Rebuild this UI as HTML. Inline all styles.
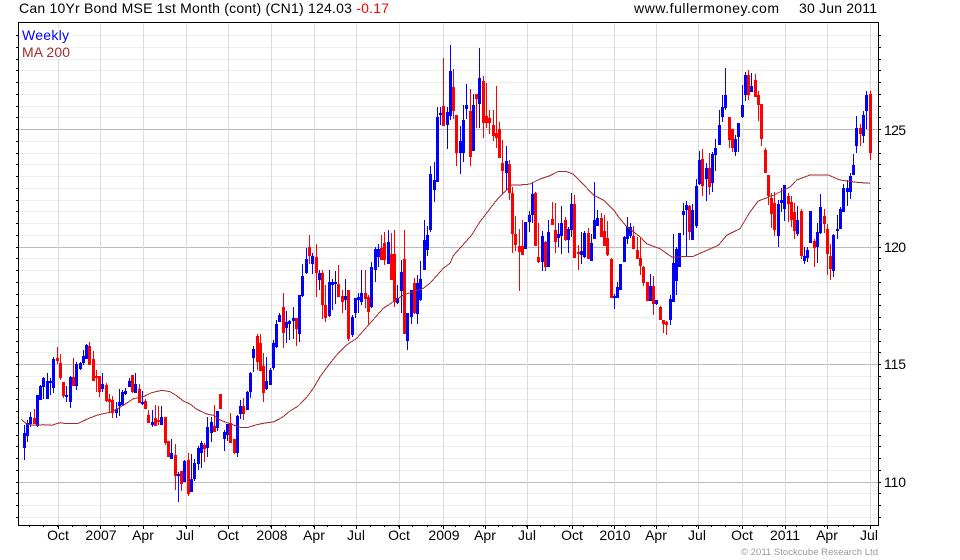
<!DOCTYPE html>
<html><head><meta charset="utf-8"><style>
html,body{margin:0;padding:0;background:#fff;width:960px;height:560px;overflow:hidden}
svg{display:block;position:absolute;left:0;top:0}
text{font-family:"Liberation Sans",Arial,sans-serif;font-size:14px;fill:#000}
</style></head><body>
<svg id="c" width="960" height="560" viewBox="0 0 960 560" xmlns="http://www.w3.org/2000/svg">
<g id="grid" shape-rendering="crispEdges"></g>
<rect x="19" y="27" width="54" height="32" fill="#fff"/>
<g id="cand" shape-rendering="crispEdges"></g>
<polyline id="ma" fill="none" stroke="#a52a2a" stroke-width="1" shape-rendering="crispEdges" points=""/>
<g id="frame" shape-rendering="crispEdges"></g>
<text x="19" y="13" textLength="370" lengthAdjust="spacing">Can 10Yr Bond MSE 1st Month (cont) (CN1) 124.03 <tspan fill="#ff0000">-0.17</tspan></text>
<text x="634" y="13" textLength="145" lengthAdjust="spacing">www.fullermoney.com</text>
<text x="799" y="13" textLength="78" lengthAdjust="spacing">30 Jun 2011</text>
<text x="22" y="40" fill="#0000ff" style="fill:#0000ff" textLength="47" lengthAdjust="spacing">Weekly</text>
<text x="22" y="57" style="fill:#a52a2a" textLength="48" lengthAdjust="spacing">MA 200</text>
<text x="884" y="135" textLength="22" lengthAdjust="spacing">125</text>
<text x="884" y="252" textLength="22" lengthAdjust="spacing">120</text>
<text x="884" y="369" textLength="22" lengthAdjust="spacing">115</text>
<text x="884" y="487" textLength="22" lengthAdjust="spacing">110</text>
<g text-anchor="middle">
<text x="58" y="540">Oct</text><text x="101" y="540">2007</text><text x="143" y="540">Apr</text><text x="185" y="540">Jul</text><text x="228" y="540">Oct</text><text x="272" y="540">2008</text><text x="314" y="540">Apr</text><text x="356" y="540">Jul</text><text x="399" y="540">Oct</text><text x="444" y="540">2009</text><text x="485" y="540">Apr</text><text x="527" y="540">Jul</text><text x="572" y="540">Oct</text><text x="615" y="540">2010</text><text x="656" y="540">Apr</text><text x="697" y="540">Jul</text><text x="742" y="540">Oct</text><text x="785" y="540">2011</text><text x="827" y="540">Apr</text><text x="869" y="540">Jul</text>
</g>
<text x="741" y="555" style="font-size:9.5px;fill:#999" textLength="137" lengthAdjust="spacing">© 2011 Stockcube Research Ltd</text>
</svg>
<script>
var NS="http://www.w3.org/2000/svg";
function R(p,x,y,w,h,f){var r=document.createElementNS(NS,"rect");r.setAttribute("x",x);r.setAttribute("y",y);r.setAttribute("width",w);r.setAttribute("height",h);r.setAttribute("fill",f);p.appendChild(r);}
var g=document.getElementById("grid"),fr=document.getElementById("frame"),cd=document.getElementById("cand");
var vx=[58,100,143,186,228,271,314,356,399,443,485,527,572,614,656,698,742,785,827,870];
for(var k=-9;k<=33;k++){var y=Math.round(129+k*11.75);if(y<=23||y>=525)continue;var maj=(k%10===0);
 R(g,18,y,860,1,maj?"#bbbbbb":"#eeeeee");
 R(fr,16,y,2,1,"#000");R(fr,879,y,2,1,"#000");}
vx.forEach(function(x){R(g,x,23,1,502,"#dcdcdc");R(fr,x,526,1,3,"#000");});
for(var i=0;i<59;i++){var x=Math.round(29+i*14.2);R(fr,x,526,1,1,"#000");}
R(fr,18,22,861,1,"#000");R(fr,18,525,861,1,"#000");R(fr,18,22,1,504,"#000");R(fr,878,22,1,504,"#000");

var col=["#0000ff","#ff0000"];
function S(xo,yo,a){a.forEach(function(d){var x=Math.floor(xo+d[0]/3),wt=Math.round(yo+d[1]/3),wb=Math.round(yo+d[2]/3),bt=Math.round(yo+d[3]/3),bb=Math.round(yo+d[4]/3),c=col[d[5]];
 R(cd,x,wt,1,Math.max(1,wb-wt),c);R(cd,x-1,bt,3,Math.max(1,bb-bt),c);});}
S(0,340,[
[73,255,360,280,324,0],[82,240,305,250,288,0],[91,215,260,231,252,0],[103,207,252,234,252,1],[112,165,260,165,258,0],[121,135,180,138,180,0],[130,112,178,114,142,0],[142,98,178,124,177,0],[151,114,165,124,130,0],[160,52,158,57,144,0],[172,20,72,54,63,1],[181,42,120,69,114,1],[190,125,174,126,168,1],[199,138,186,165,171,0],[211,108,204,111,186,0],[220,54,138,111,138,1],[229,66,150,72,138,0],[241,66,90,69,87,0],[250,30,75,48,69,0],[259,12,57,15,57,0],[268,6,75,18,75,1],[280,33,123,57,123,1],[290,90,156,108,114,1],[299,108,170,108,156,1],[307,99,156,132,147,0],[319,129,186,135,183,1],[328,162,216,177,186,1],[337,168,234,180,219,1],[349,186,234,207,219,0],[358,147,228,186,198,0],[367,150,198,156,195,0],[376,144,165,153,162,0],[388,114,141,123,141,0],[397,105,159,105,156,1],[406,99,159,132,159,0],[418,132,189,147,189,1],[427,153,195,186,192,0],[436,177,207,183,207,1],[445,210,249,225,249,1],[457,210,261,246,255,0],[466,195,258,234,258,1],[475,197,255,240,246,1],[484,198,255,231,255,0],[496,231,315,231,309,1],[505,303,351,303,351,1],[514,297,357,339,357,0],[526,312,450,345,408,1],[535,396,486,402,408,0],[544,393,453,393,432,1],[553,360,426,363,426,0],[565,339,468,360,462,1],[574,342,456,417,456,0],[583,357,423,369,417,0],[595,318,390,324,372,0],[604,303,384,309,339,0],[613,309,366,315,327,1],[622,231,351,261,324,0],[634,231,306,246,279,0],[643,195,276,258,276,1],[652,213,273,213,264,0],[661,162,207,162,207,1],[673,270,333,276,297,0],[682,252,303,252,285,0],[691,219,309,249,309,1],[703,297,342,297,339,1],[712,225,351,228,339,0],[721,180,237,198,222,0],[730,174,240,198,222,1],[742,153,210,156,210,0],[751,96,174,99,156,0]
]);
S(160,240,[
[280,318,396,327,354,0],[292,282,390,288,366,1],[301,282,393,309,393,1],[310,340,486,378,459,1],[319,351,450,423,447,0],[331,384,435,390,435,0],[340,300,390,309,384,0],[349,240,324,252,321,0],[358,219,246,225,246,0],[370,159,324,201,279,1],[379,213,310,246,264,0],[388,240,300,243,252,0],[400,201,297,234,243,0],[409,234,318,234,267,1],[418,165,306,165,282,0],[427,72,171,108,168,0],[439,24,102,57,99,0],[448,-15,72,21,48,1],[457,39,102,48,72,0],[469,12,172,51,99,1],[478,90,150,99,120,0],[487,90,237,99,195,1],[496,135,246,195,234,1],[508,90,231,126,228,0],[517,117,210,126,135,0],[526,93,192,126,132,0],[535,75,171,132,171,1],[547,150,219,168,186,1],[556,117,210,168,180,0],[565,150,303,150,297,1],[577,225,291,231,285,0],[586,174,234,174,219,0],[595,159,219,171,180,0],[604,90,195,159,186,0],[616,90,204,159,177,1],[625,165,252,171,216,1],[634,66,204,81,201,0],[646,21,126,27,90,0],[655,12,81,27,51,0],[664,-15,60,24,60,1],[673,-24,75,9,60,1],[685,-30,72,6,72,0],[694,-20,120,42,120,1],[703,-30,200,42,186,1],[712,135,192,174,189,0],[724,60,220,96,153,0],[733,-30,282,57,282,1],[742,219,330,219,303,0],[754,150,252,150,231,0],[763,114,222,129,220,1],[772,105,252,129,222,0],[781,63,183,117,180,0]
]);
S(400,140,[
[73,240,360,300,390,0],[82,258,348,285,330,0],[91,78,276,102,270,0],[103,66,186,120,150,0]
]);
S(320,30,[
[352,231,456,261,456,0],[361,231,285,249,255,0],[370,84,288,228,288,1],[382,231,357,246,285,0],[391,45,270,123,258,0],[400,117,267,171,243,1],[409,255,408,255,369,1],[421,288,432,333,369,0],[430,225,396,270,369,0],[439,162,267,225,237,0],[451,177,408,243,381,1],[460,192,363,225,363,0],[469,192,294,192,207,1],[478,54,294,144,222,0],[490,138,324,153,279,1],[499,159,294,258,279,1],[508,240,312,264,279,1],[520,240,333,285,318,1],[529,168,354,309,324,1],[538,276,384,297,384,1],[547,330,492,399,423,1],[559,348,480,393,429,0],[568,390,510,402,489,1]
]);
S(480,170,[
[97,51,249,69,192,1],[106,138,243,192,225,1],[118,177,363,228,246,1],[127,150,255,228,255,1],[136,156,237,156,237,0],[148,123,186,135,156,0],[157,36,159,72,135,0],[166,66,228,69,228,1],[175,159,279,261,276,1],[187,183,303,198,276,0],[196,213,303,216,291,1],[205,150,291,186,291,0],[217,96,165,147,165,1],[226,99,249,180,216,1],[235,159,231,192,204,0],[244,108,252,159,198,0],[256,141,213,150,210,1],[265,171,249,177,210,0],[274,69,201,102,180,0],[283,75,264,102,264,1],[295,225,300,246,252,1],[304,186,282,243,255,0],[313,183,264,189,261,0],[325,174,267,189,267,1],[334,192,273,219,273,0],[343,36,207,150,207,0],[352,120,168,144,168,0],[364,129,201,144,201,1],[373,135,228,183,228,1],[382,153,258,204,255,1],[394,264,384,267,384,1],[403,372,417,378,384,0],[412,336,384,351,384,0],[421,282,360,282,360,0],[433,198,276,201,276,0],[442,141,222,171,207,0],[451,159,204,171,198,0],[460,168,237,198,237,1],[472,201,267,240,267,1],[481,201,315,264,288,1],[490,288,348,291,339,1],[502,336,393,336,393,1],[511,312,393,348,393,0],[520,318,435,348,402,1],[529,390,405,390,402,0],[541,408,450,411,450,1],[550,450,489,450,462,1],[559,453,495,456,465,1],[571,375,465,387,450,0],[580,192,396,279,396,0],[589,231,375,237,333,0],[598,189,291,189,291,0],[610,99,195,123,135,0],[619,93,258,105,120,0],[628,105,210,108,186,1],[637,102,210,120,210,0],[649,27,174,48,168,0]
]);
S(640,0,[
[178,453,555,480,552,0],[187,447,588,477,558,1],[199,489,603,504,537,0],[208,459,585,504,561,1],[217,456,576,462,549,0],[226,417,513,444,465,0],[238,330,435,375,435,0],[247,285,366,321,351,0],[256,204,330,285,324,0],[268,351,444,351,420,1],[277,387,456,387,444,1],[286,405,468,417,456,0],[295,369,456,369,411,0],[307,255,354,315,351,0],[316,216,303,225,285,0],[325,210,300,225,285,1],[334,219,276,258,276,0],[346,222,291,240,291,1],[355,273,363,285,315,1],[364,312,438,312,417,1],[376,444,519,450,519,1]
]);
S(640,187,[
[385,-36,54,-36,27,1],[394,18,123,33,81,1],[403,15,147,48,129,1],[415,39,180,51,147,0],[424,3,75,39,48,0],[433,-6,102,-6,66,0],[445,18,105,27,51,1],[454,27,120,45,99,1],[463,48,156,75,132,1],[472,57,147,99,141,0],[484,66,216,72,207,1],[493,180,231,207,222,0],[502,180,225,189,213,0],[511,72,168,72,168,0],[523,156,240,162,183,1],[532,108,228,135,180,0],[541,21,141,60,138,0],[553,66,138,87,111,1],[562,111,264,126,201,1],[571,171,279,207,246,1],[580,141,270,144,252,0],[592,84,156,126,132,0],[601,60,126,66,126,0],[610,-9,75,3,75,0],[622,-21,57,3,15,0],[631,-42,36,-33,15,0]
]);
S(640,0,[
[640,462,525,495,525,0],[649,348,459,384,438,0],[661,372,438,384,402,1],[670,333,429,345,408,0],[679,273,387,285,333,0],[691,273,480,282,459,1]
]);
var pts=[];
function P(xo,yo,a){a.forEach(function(p){pts.push((xo+p[0]/3).toFixed(1)+","+(yo+p[1]/3).toFixed(1));});}
P(0,340,[[63,238],[80,252],[100,256],[130,254],[155,256],[180,248],[200,251],[235,250],[260,238],[290,226],[310,221],[335,216],[370,196],[400,176],[430,170],[455,158],[485,151],[510,155],[530,167],[550,183],[570,192],[590,208],[620,222],[640,226],[660,240],[690,251],[720,262],[745,262],[770,254],[795,249],[820,246],[845,233],[870,213],[895,198],[920,172],[940,145],[958,115]]);
P(160,240,[[480,410],[510,370],[530,345],[560,315],[590,295],[630,250],[670,205],[700,185],[730,165],[790,145]]);
P(400,140,[[90,430],[130,385],[150,370],[160,347],[215,285],[240,245],[290,180],[325,145],[335,135],[372,134],[390,132]]);
P(320,30,[[660,447],[690,437],[715,424],[738,424],[760,433],[790,463],[820,495],[850,510],[885,545],[895,560]]);
P(480,170,[[440,170],[480,200]]);
P(640,187,[[20,170],[60,185],[95,210],[160,208],[235,175],[260,145],[300,125],[330,75],[355,42],[400,25],[450,0]]);
P(640,0,[[470,540],[510,525],[565,525],[600,540],[650,547],[690,550]]);
document.getElementById("ma").setAttribute("points",pts.join(" "));
</script>
</body></html>
